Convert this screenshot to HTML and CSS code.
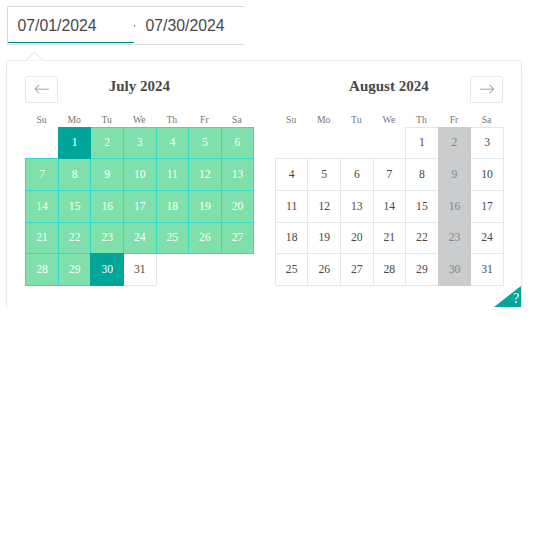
FILE: index.html
```html
<!DOCTYPE html>
<html>
<head>
<meta charset="utf-8">
<link rel="stylesheet" href="styles.css">
</head>
<body>
<div class="page">
  <div class="drp-input">
    <div class="date-input first focused"><div class="date-text">07/01/2024</div></div>
    <span class="arrow"><span class="arrow-dot"></span></span>
    <div class="date-input second"><div class="date-text">07/30/2024</div></div>
  </div>
  <div class="picker">
    <svg class="fang" viewBox="0 0 20 10" width="17" height="8.5"><path d="M0,10 20,10 10,0z" fill="#fff"/><path d="M0,10 10,0 20,10" fill="none" stroke="#dbdbdb" stroke-width="1"/></svg>
    <div class="daypicker">
      <div class="months">
        <div class="month">
          <div class="month-head">
            <button class="nav"><svg viewBox="0 0 1000 1000" width="15.8" height="15.8"><path fill="#82888a" d="M336 275L126 485h806c13 0 23 10 23 23s-10 23-23 23H126l210 210c11 11 11 21 0 32-5 5-10 7-16 7s-11-2-16-7L55 524c-11-11-11-21 0-32l249-249c21-22 53 10 32 32z"/></svg></button>
            <div class="caption"><strong>July 2024</strong></div>
            <div class="nav-spacer"></div>
          </div>
          <div class="week-head"><span>Su</span><span>Mo</span><span>Tu</span><span>We</span><span>Th</span><span>Fr</span><span>Sa</span></div>
          <div class="grid">
            <div class="blank"></div>
            <div class="day sel">1</div><div class="day span">2</div><div class="day span">3</div><div class="day span">4</div><div class="day span">5</div><div class="day span">6</div>
            <div class="day span">7</div><div class="day span">8</div><div class="day span">9</div><div class="day span">10</div><div class="day span">11</div><div class="day span">12</div><div class="day span">13</div>
            <div class="day span">14</div><div class="day span">15</div><div class="day span">16</div><div class="day span">17</div><div class="day span">18</div><div class="day span">19</div><div class="day span">20</div>
            <div class="day span">21</div><div class="day span">22</div><div class="day span">23</div><div class="day span">24</div><div class="day span">25</div><div class="day span">26</div><div class="day span">27</div>
            <div class="day span">28</div><div class="day span">29</div><div class="day sel">30</div><div class="day">31</div>
          </div>
        </div>
        <div class="month">
          <div class="month-head">
            <div class="nav-spacer"></div>
            <div class="caption"><strong>August 2024</strong></div>
            <button class="nav"><svg viewBox="0 0 1000 1000" width="15.8" height="15.8"><path fill="#82888a" d="M694 242l249 250c12 11 12 21 1 32L694 773c-5 5-10 7-16 7s-11-2-16-7c-11-11-11-21 0-32l210-210H68c-13 0-23-10-23-23s10-23 23-23h806L662 275c-21-22 11-54 32-33z"/></svg></button>
          </div>
          <div class="week-head"><span>Su</span><span>Mo</span><span>Tu</span><span>We</span><span>Th</span><span>Fr</span><span>Sa</span></div>
          <div class="grid">
            <div class="blank"></div><div class="blank"></div><div class="blank"></div><div class="blank"></div>
            <div class="day">1</div><div class="day blocked">2</div><div class="day">3</div>
            <div class="day">4</div><div class="day">5</div><div class="day">6</div><div class="day">7</div><div class="day">8</div><div class="day blocked">9</div><div class="day">10</div>
            <div class="day">11</div><div class="day">12</div><div class="day">13</div><div class="day">14</div><div class="day">15</div><div class="day blocked">16</div><div class="day">17</div>
            <div class="day">18</div><div class="day">19</div><div class="day">20</div><div class="day">21</div><div class="day">22</div><div class="day blocked">23</div><div class="day">24</div>
            <div class="day">25</div><div class="day">26</div><div class="day">27</div><div class="day">28</div><div class="day">29</div><div class="day blocked">30</div><div class="day">31</div>
          </div>
        </div>
      </div>
      <div class="kbd"><span class="kbd-q">?</span></div>
    </div>
  </div>
</div>
</body>
</html>
```

FILE: styles.css
```css
html, body {
  margin: 0;
  padding: 0;
  background: #fff;
}

.page {
  padding: 6px 0 0 7px;
  font-family: "Liberation Serif", "Times New Roman", serif;
}

.drp-input {
  display: inline-flex;
  align-items: flex-start;
  border: 1px solid #dbdbdb;
  border-right: 0;
  background: #fff;
}

.date-input {
  box-sizing: border-box;
  padding: 9px 9px 6.3px;
  border-bottom: 1.4px solid transparent;
  font-family: "Liberation Sans", Arial, sans-serif;
  font-size: 15.8px;
  line-height: 20px;
  color: #484848;
}

.date-input.first {
  width: 126px;
  padding-left: 9.5px;
}

.date-input.second {
  width: 108.3px;
}

.date-input.focused {
  border-bottom-color: #008489;
}

.arrow {
  width: 2.5px;
  height: 36.7px;
  display: flex;
  align-items: center;
}

.arrow-dot {
  display: block;
  width: 1px;
  height: 1.5px;
  margin-top: 1px;
  background: #8a8a8a;
}

.picker {
  position: relative;
  margin-top: 16.3px;
  width: 514.2px;
}

.fang {
  position: absolute;
  left: 18.5px;
  top: -8.6px;
  z-index: 2;
  display: block;
}

.daypicker {
  position: relative;
  background: #fff;
  border-radius: 2.5px;
  box-shadow: 0 2px 6px rgba(0, 0, 0, 0.05), 0 0 0 1px rgba(0, 0, 0, 0.07);
}

.months {
  display: flex;
  padding: 0 7.5px;
}

.month {
  width: 228px;
  padding: 15px 10.8px 22.3px;
}

.month-head {
  display: flex;
  align-items: flex-start;
  height: 26.7px;
}

.nav {
  box-sizing: border-box;
  width: 32.5px;
  height: 26.7px;
  margin: 0;
  padding: 0;
  border: 1px solid #e4e7e7;
  border-radius: 2.5px;
  background: #fff;
  display: flex;
  align-items: center;
  justify-content: center;
}

.nav svg {
  display: block;
}

.nav-spacer {
  width: 32.5px;
  flex: none;
}

.caption {
  flex: 1;
  text-align: center;
  margin-top: 2.4px;
  font-size: 15px;
  line-height: 17px;
  color: #484848;
}

.week-head {
  display: grid;
  grid-template-columns: repeat(7, 32.57px);
  padding: 11.3px 0 0.7px;
  font-size: 9.7px;
  line-height: 12px;
  color: #757575;
  text-align: center;
}

.grid {
  display: grid;
  grid-template-columns: repeat(7, 32.57px);
  grid-auto-rows: 31.67px;
}

.day {
  box-sizing: border-box;
  width: 33.57px;
  height: 32.67px;
  border: 1px solid #e4e7e7;
  background: #fff;
  color: #484848;
  font-size: 11.67px;
  display: flex;
  align-items: center;
  justify-content: center;
}

.day.span {
  z-index: 1;
  background: #80e0ab;
  border-color: #33dacd;
  color: #fff;
}

.day.sel {
  z-index: 2;
  background: #00a699;
  border-color: #00a699;
  color: #fff;
}

.day.blocked {
  z-index: 1;
  background: #cacccd;
  border-color: #cacccd;
  color: #82888a;
}

.kbd {
  position: absolute;
  right: 0;
  bottom: 0;
  width: 0;
  height: 0;
  border-top: 21.7px solid transparent;
  border-right: 27.5px solid #00a699;
}

.kbd-q {
  position: absolute;
  right: -25px;
  bottom: 1px;
  color: #fff;
  font-size: 14px;
  line-height: 14px;
}
```
